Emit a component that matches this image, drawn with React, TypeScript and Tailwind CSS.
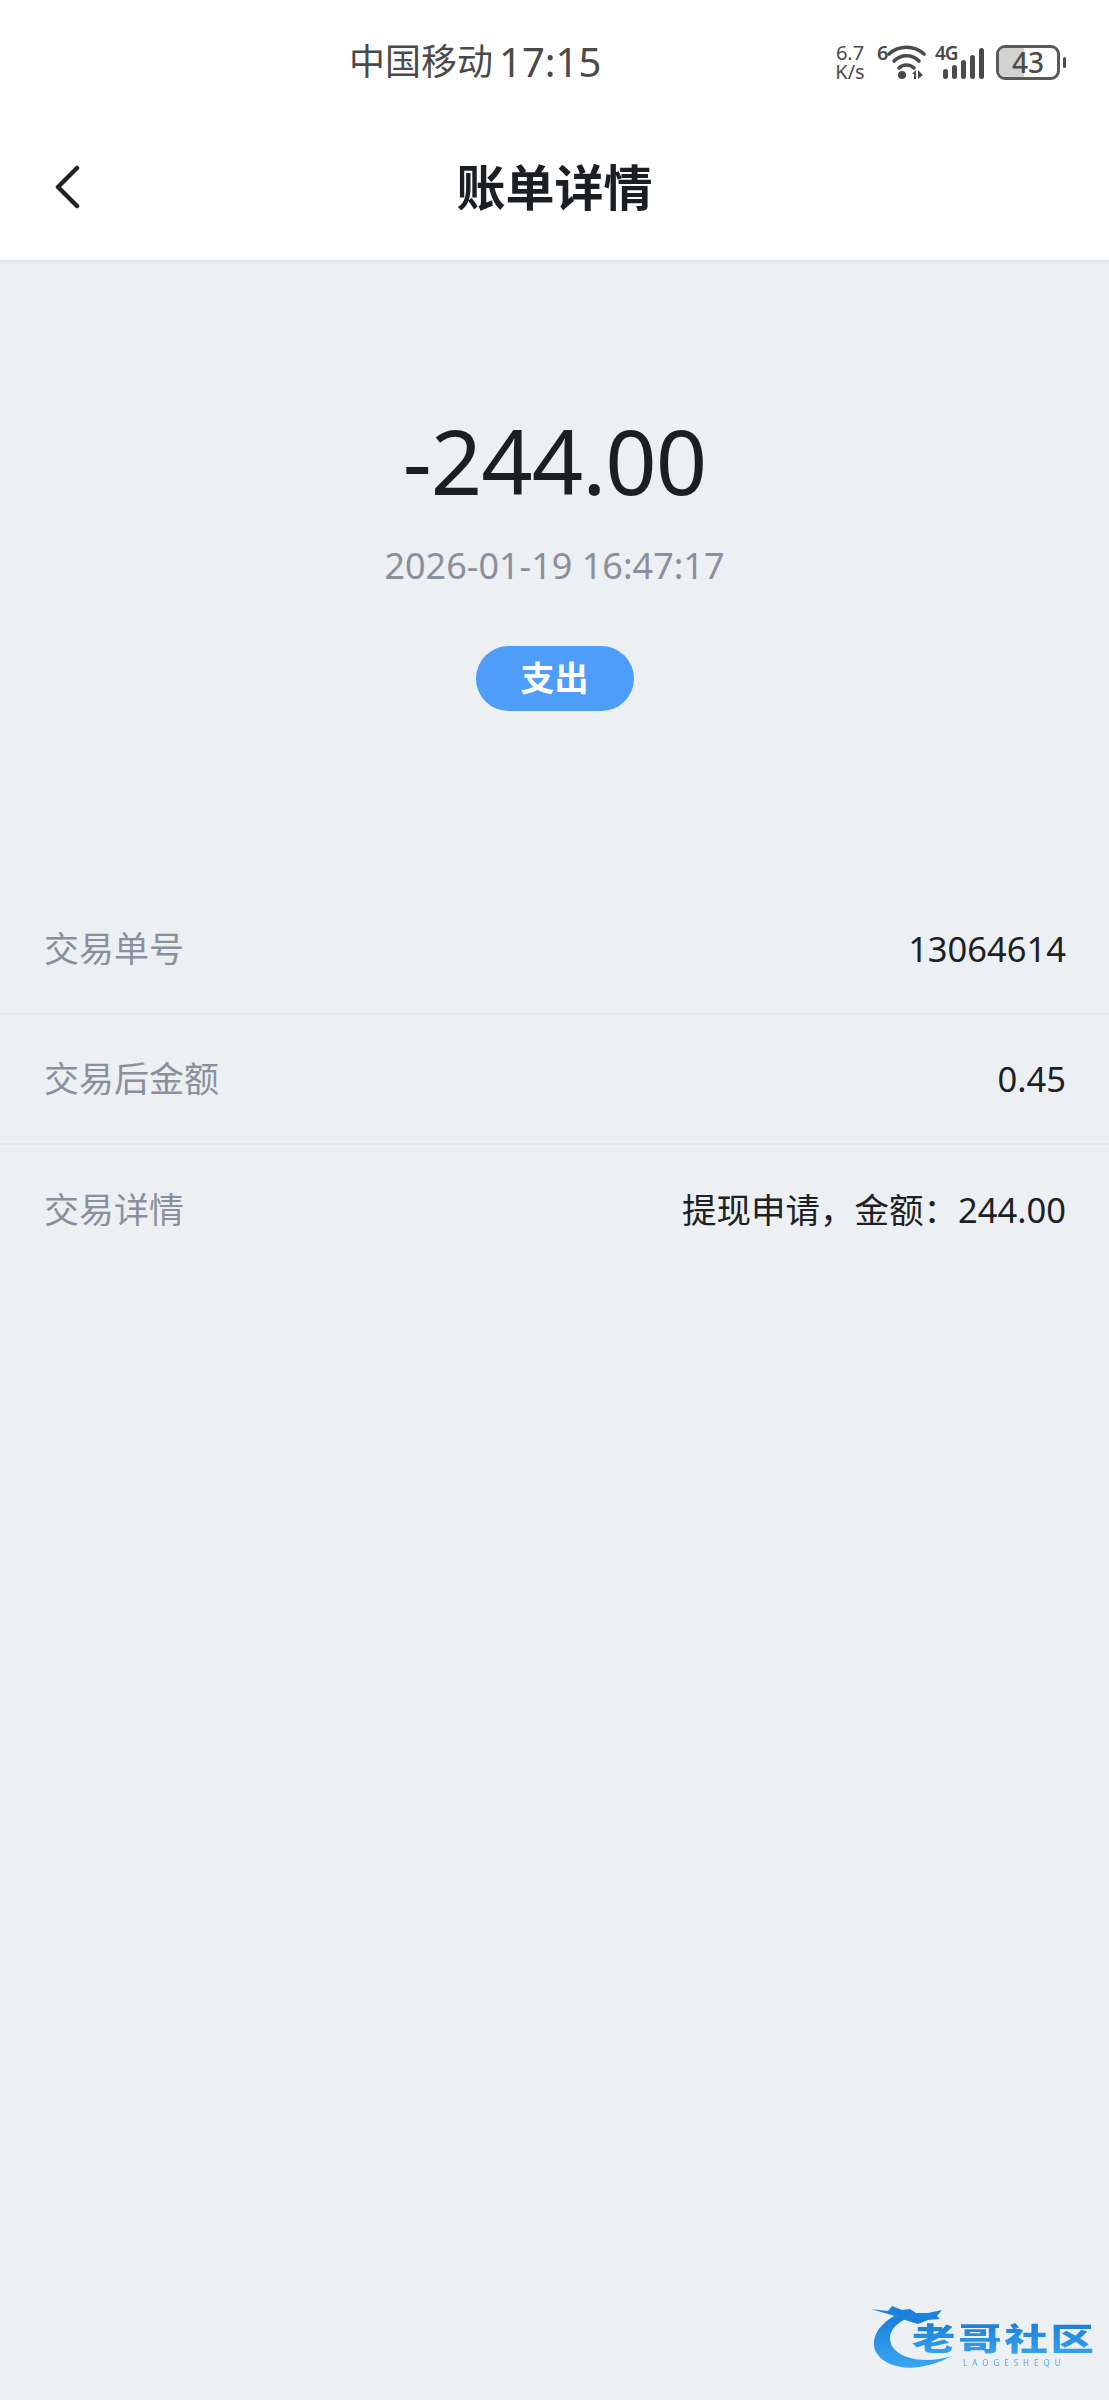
const uiFont = '[font-family:"Noto_Sans","Noto_Sans_CJK_SC",sans-serif]'

function StatusIcons() {
  return (
    <div className="ml-auto mr-[43px] flex items-center text-[#4a4a4a]">
      <div className="flex w-[34px] flex-col items-center text-[20px] leading-[19px]">
        <span>6.7</span>
        <span>K/s</span>
      </div>
      {/* wifi */}
      <div className="relative ml-[10px] h-[36px] w-[50px]">
        <span className="absolute left-0 top-[-1px] text-[20px] font-semibold leading-[20px]">6</span>
        <svg width="50" height="36" viewBox="0 0 50 36" className="absolute inset-0" fill="none">
          <path d="M12 10 C22 1 37 1 47 10" stroke="#4a4a4a" strokeWidth="3.6" strokeLinecap="round" />
          <path d="M17 17 C24 10 35 10 42 17" stroke="#4a4a4a" strokeWidth="3.6" strokeLinecap="round" />
          <path d="M22 24 C26 20 33 20 37 24" stroke="#4a4a4a" strokeWidth="3.6" strokeLinecap="round" />
          <circle cx="25" cy="31" r="4" fill="#4a4a4a" />
          <path d="M35 30 L39 26 V35 H37 V30 Z M41 26 L46 31 L41 35 Z" fill="#4a4a4a" />
        </svg>
      </div>
      {/* signal */}
      <div className="relative ml-[8px] h-[36px] w-[50px]">
        <span className="absolute left-0 top-[-1px] text-[19px] font-semibold leading-[20px] tracking-[-1px]">4G</span>
        <svg width="50" height="36" viewBox="0 0 50 36" className="absolute inset-0">
          <rect x="8" y="25" width="5" height="10" rx="2.5" fill="#4a4a4a" />
          <rect x="17" y="21" width="5" height="14" rx="2.5" fill="#4a4a4a" />
          <rect x="26" y="16" width="5" height="19" rx="2.5" fill="#4a4a4a" />
          <rect x="35" y="11" width="5" height="24" rx="2.5" fill="#4a4a4a" />
          <rect x="44" y="4" width="5" height="31" rx="2.5" fill="#4a4a4a" />
        </svg>
      </div>
      {/* battery */}
      <div className="ml-[11px] flex items-center">
        <div className="relative flex h-[35px] w-[64px] items-center justify-center rounded-[9px] border-[3px] border-[#5a5a5a] text-[28px] font-medium leading-[28px]">
          <div className="absolute inset-y-0 left-0 w-[43%] rounded-l-[6px] bg-[#d2d2d2]" />
          <span className="relative">43</span>
        </div>
        <div className="ml-[3px] h-[11px] w-[3px] rounded-full bg-[#4a4a4a]" />
      </div>
    </div>
  )
}

function Row({ label, value, last }: { label: string; value: string; last?: boolean }) {
  return (
    <div className={`flex h-[130px] items-center justify-between pl-[44px] pr-[43px] ${last ? "" : "border-b-2 border-[#e4e9ed]"}`}>
      <span className="text-[35px] text-[#8b8f9c]">{label}</span>
      <span className="text-[34.5px] text-[#1d2024]">{value}</span>
    </div>
  )
}

function Watermark() {
  return (
    <div className="absolute bottom-0 right-0 h-[120px] w-[259px] blur-[0.5px]">
      <svg width="259" height="120" viewBox="0 0 259 120" className="absolute inset-0">
        <defs>
          <linearGradient id="dragon" x1="0" y1="0" x2="0" y2="1">
            <stop offset="0" stopColor="#1a7fdc" />
            <stop offset="1" stopColor="#3aa6f0" />
          </linearGradient>
        </defs>
        <path
          d="M44 36 C27 46 20 60 26 72 C36 90 68 94 102 76 C78 84 50 80 42 66 C36 54 44 44 58 38 Z"
          fill="url(#dragon)"
        />
        <path
          d="M21 29 L38 31 L42 26 L52 30 L60 29 L66 33 L78 33 L92 30 L87 36 L90 39 L78 40 L68 44 L58 41 L48 37 L38 34 Z"
          fill="#1b82de"
        />
      </svg>
      <div className="absolute left-[62px] top-[36px] origin-left scale-x-[1.4] whitespace-nowrap bg-gradient-to-b from-[#1577d6] to-[#3aa8f2] bg-clip-text text-[31px] font-black leading-[44px] tracking-[2px] text-transparent">
        老哥社区
      </div>
      <div className="absolute left-[113px] top-[78px] whitespace-nowrap text-[8px] leading-[10px] tracking-[5px] text-[#5aa8e8]">
        LAOGESHEQU
      </div>
    </div>
  )
}

export default function App() {
  return (
    <div className={`relative h-[2400px] w-full bg-[#ecf0f3] ${uiFont}`}>
      <header className="h-[262px] border-b-2 border-[#e2e4e6] bg-white">
        <div className="flex h-[124px] items-center text-[#4a4a4a]">
          <span className="ml-[349px] text-[36px] leading-none">中国移动</span>
          <span className="ml-[6px] text-[40px] leading-none">17:15</span>
          <StatusIcons />
        </div>
        <div className="grid h-[126px] grid-cols-[1fr_auto_1fr] items-center">
          <svg width="28" height="44" viewBox="0 0 28 44" fill="none" className="ml-[53px]">
            <path d="M24 3 L5 22 L24 41" stroke="#1f2226" strokeWidth="4.5" strokeLinecap="round" strokeLinejoin="round" />
          </svg>
          <h1 className="text-[49px] font-bold leading-none text-[#1b1e22]">账单详情</h1>
        </div>
      </header>

      <section className="flex flex-col items-center pt-[148px]">
        <div className="text-[90px] leading-[100px] tracking-[-1px] text-[#1b1f24]">-244.00</div>
        <div className="mt-[33px] text-[36px] leading-[46px] text-[#8b8f9c]">2026-01-19 16:47:17</div>
        <div className="mt-[57px] flex h-[65px] w-[158px] items-center justify-center rounded-full bg-[#4f9dfb] text-[34px] font-bold text-white">
          支出
        </div>
      </section>

      <section className="mt-[174px]">
        <Row label="交易单号" value="13064614" />
        <Row label="交易后金额" value="0.45" />
        <Row label="交易详情" value="提现申请，金额：244.00" last />
      </section>

      <Watermark />
    </div>
  )
}
